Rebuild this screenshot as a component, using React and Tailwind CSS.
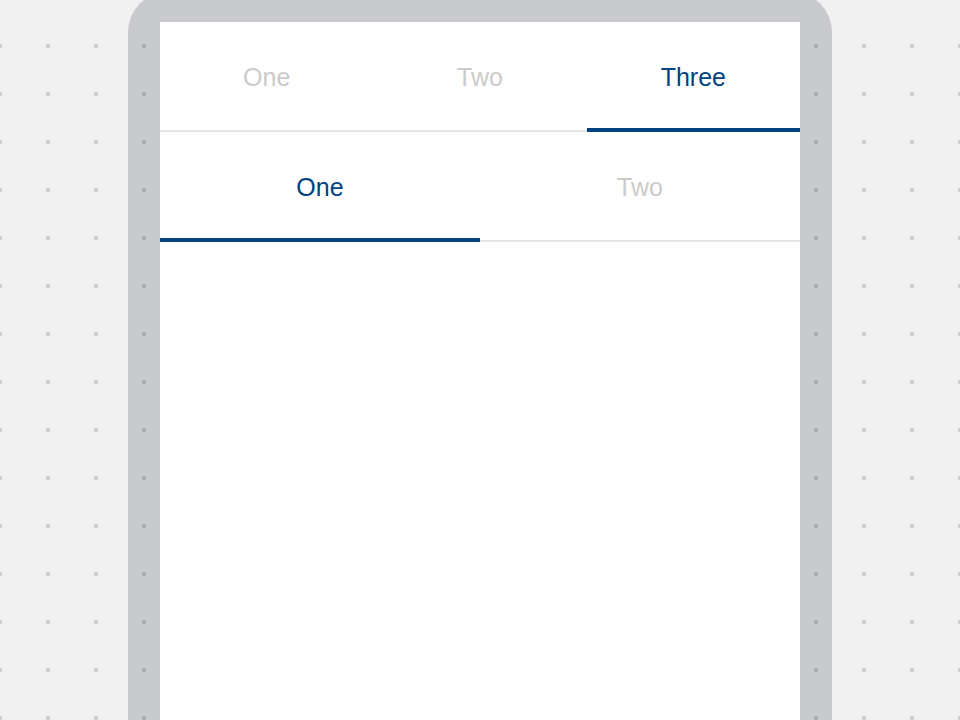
import React, { useState } from "react";

function TabBar({ tabs, initial }) {
  const [active, setActive] = useState(initial);
  return (
    <div className="flex h-[110px] border-b-2 border-[#e6e6e6]">
      {tabs.map((t, i) => (
        <button
          key={t}
          onClick={() => setActive(i)}
          className={
            "relative flex flex-1 items-center justify-center pt-[4px] text-[25px] font-['Liberation_Sans',Arial,sans-serif] " +
            (i === active ? "text-[#004282]" : "text-[#cbcbcb]")
          }
        >
          {t}
          {i === active && (
            <span className="absolute left-0 right-0 bottom-[-2px] h-[4px] bg-[#004282]" />
          )}
        </button>
      ))}
    </div>
  );
}

export default function App() {
  return (
    <div className="h-[720px] w-full overflow-hidden bg-[#f0f0f0] bg-[radial-gradient(circle,rgba(0,0,0,0.16)_1.6px,transparent_2.5px)] bg-[length:48px_48px] bg-[position:-24px_22px]">
      <div className="mx-auto mt-[-8px] w-[704px] rounded-t-[40px] bg-[#c9cacd] bg-[radial-gradient(circle,rgba(0,0,0,0.16)_1.6px,transparent_2.5px)] bg-[length:48px_48px] bg-[position:-8px_-18px] px-[32px] pt-[30px]">
        <div className="h-[720px] bg-white">
          <TabBar tabs={["One", "Two", "Three"]} initial={2} />
          <TabBar tabs={["One", "Two"]} initial={0} />
        </div>
      </div>
    </div>
  );
}
